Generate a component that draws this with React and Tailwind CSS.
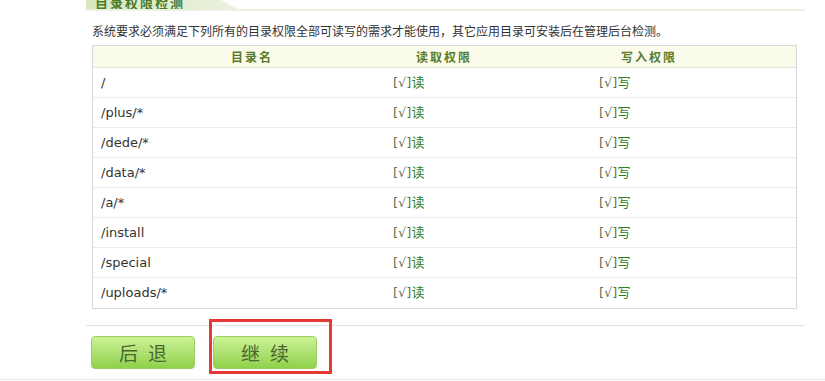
const rows = [
  "/",
  "/plus/*",
  "/dede/*",
  "/data/*",
  "/a/*",
  "/install",
  "/special",
  "/uploads/*",
];

const cjk = "font-['DejaVu_Sans','Noto_Sans_CJK_SC',sans-serif]";

function GreenButton({ label }) {
  return (
    <button className="w-[104px] h-[33px] rounded-[4px] border border-[#9ccd62] bg-gradient-to-b from-[#cdf296] to-[#8fd14a] text-[19px] text-[#4a6630] font-['Noto_Sans_CJK_SC',sans-serif] leading-none flex items-center justify-center gap-[10px]">
      {label.map((ch) => (
        <span key={ch}>{ch}</span>
      ))}
    </button>
  );
}

function App() {
  return (
    <div className={`relative w-[825px] h-[381px] bg-white overflow-hidden ${cjk}`}>
      <div className="ml-[86px] w-[719px]">
        {/* tab header, clipped at top */}
        <div className="flex h-[11px] overflow-hidden border-b-2 border-[#eef1e2]">
          <div className="w-[152px] h-[9px] bg-gradient-to-r from-[#d6e7bf] to-[#eaf3df] [clip-path:polygon(0_0,135px_0,152px_9px,0_9px)] flex items-end">
            <span className="pl-[9px] text-[13px] font-bold leading-[13px] tracking-[2px] text-[#4f7a24] font-['Noto_Sans_CJK_SC',sans-serif]">
              目录权限检测
            </span>
          </div>
        </div>

        <div className="h-[34px] pt-[13px] pl-[6px] text-[12px] leading-[14px] text-[#333] font-['Noto_Sans_CJK_SC',sans-serif]">
          系统要求必须满足下列所有的目录权限全部可读写的需求才能使用，其它应用目录可安装后在管理后台检测。
        </div>

        {/* permission table */}
        <div className="ml-[6px] w-[705px] border border-[#d9d9d9]">
          <div className="grid grid-cols-[300px_206px_1fr] h-[22px] items-center bg-[#fafbea] border-b border-[#e6e8d8] text-[12px] font-bold tracking-[2px] text-[#587c2c] font-['Noto_Sans_CJK_SC',sans-serif]">
            <div className="pl-[138px]">目录名</div>
            <div className="pl-[23px]">读取权限</div>
            <div className="pl-[22px]">写入权限</div>
          </div>
          {rows.map((dir, i) => (
            <div
              key={dir}
              className={`grid grid-cols-[300px_206px_1fr] h-[30px] items-center text-[13px] ${
                i < rows.length - 1 ? "border-b border-[#ececec]" : ""
              }`}
            >
              <div className="pl-[8px] text-[#333]">{dir}</div>
              <div className="text-[#2f7d1f]">
                <span className="text-[#5f6f4a]">[√]</span>读
              </div>
              <div className="text-[#2f7d1f]">
                <span className="text-[#5f6f4a]">[√]</span>写
              </div>
            </div>
          ))}
        </div>

        <div className="mt-[16px] border-t border-[#e2e2e2]" />

        <div className="mt-[10px] ml-[5px] flex gap-[18px]">
          <GreenButton label={["后", "退"]} />
          <GreenButton label={["继", "续"]} />
        </div>
      </div>

      <div className="mt-[10px] border-t border-[#e4e4e4]" />

      {/* red highlight annotation */}
      <div className="absolute left-[209px] top-[319px] w-[123px] h-[55px] border-[3px] border-[#e53935]" />
    </div>
  );
}

export default App;
